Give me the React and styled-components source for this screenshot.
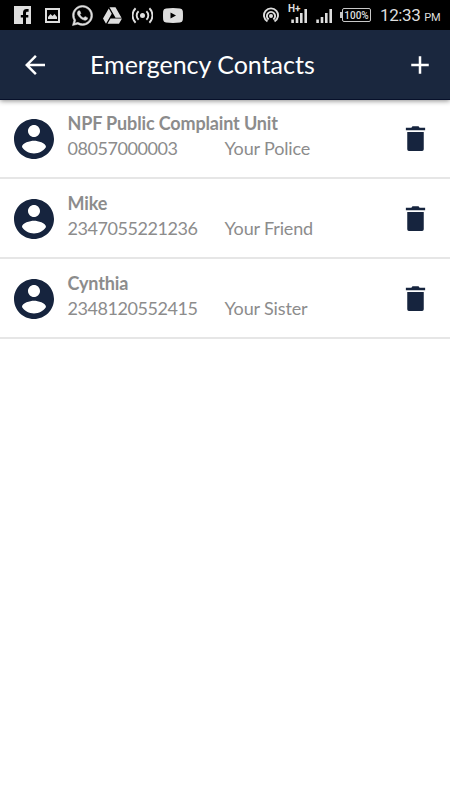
import React from "react";
import styled, { createGlobalStyle } from "styled-components";
import { FaWhatsapp } from "react-icons/fa";
import { MdAdd, MdArrowBack } from "react-icons/md";

const GlobalStyle = createGlobalStyle`
  * {
    box-sizing: border-box;
  }

  body {
    margin: 0;
    background: #fff;
    font-family: Lato, sans-serif;
  }

  svg {
    display: block;
    flex-shrink: 0;
  }
`;

const Screen = styled.div`
  width: 450px;
  height: 800px;
  overflow: hidden;
  background: #fff;
`;

const StatusBar = styled.div`
  display: flex;
  justify-content: space-between;
  height: 30px;
  padding: 0 10px 0 14px;
  background: #000;
  color: #dedede;
  font-family: Roboto, sans-serif;
`;

const StatusGroup = styled.div`
  display: flex;
  align-items: center;
`;

const StatusIcon = styled.svg`
  margin-left: ${props => props.$gap || 0}px;
  fill: currentColor;
`;

const ChatIcon = styled(FaWhatsapp)`
  margin: 0 9px 0 11px;
  stroke: currentColor;
  stroke-width: 12px;
`;

const Signal = styled.div`
  position: relative;
  margin: 2px 0 0 ${props => props.$gap}px;
`;

const NetworkType = styled.span`
  position: absolute;
  top: -5px;
  left: -3px;
  font-size: 10px;
  font-weight: 700;
  line-height: 10px;
`;

const Battery = styled.div`
  display: flex;
  align-items: center;
  margin-left: 8px;

  &::before {
    content: "";
    width: 2px;
    height: 6px;
    background: #c8c8c8;
  }
`;

const BatteryLevel = styled.span`
  width: 29px;
  height: 14px;
  border: 1px solid #c8c8c8;
  border-radius: 2px;
  font-size: 10px;
  font-weight: 500;
  line-height: 13px;
  text-align: center;
`;

const Clock = styled.span`
  width: 60px;
  margin-left: 9px;
  font-size: 17px;
  line-height: 30px;
  letter-spacing: -0.4px;
  white-space: nowrap;
  padding-top: 2px;
`;

const Meridiem = styled.small`
  margin-left: 4px;
  font-size: 11px;
`;

const Header = styled.header`
  position: relative;
  display: flex;
  align-items: center;
  height: 70px;
  padding: 0 15px 0 20px;
  background: #1a273e;
  border-bottom: 1px solid #07102a;
  box-shadow: 0 1px 5px rgba(0, 0, 0, 0.45);
  color: #fff;
`;

const Title = styled.h1`
  flex: 1;
  margin: -2px 0 0 40px;
  font-size: 25px;
  font-weight: 400;
  line-height: 30px;
`;

const ContactList = styled.ul`
  margin: -1px 0 0;
  padding: 0;
  list-style: none;
`;

const ContactRow = styled.li`
  display: flex;
  align-items: center;
  height: 80px;
  padding: 0 18px 0 10px;
  border-bottom: 2px solid #e6e6e6;
  color: #16243e;
`;

const Avatar = styled.svg`
  width: 48px;
  height: 48px;
  margin-top: 1px;
  fill: currentColor;
`;

const ContactInfo = styled.div`
  flex: 1;
  margin: -6px 0 0 9.5px;
  color: #8c8c8c;
  font-size: 18px;
`;

const ContactName = styled.div`
  font-weight: 700;
  line-height: 26px;
  letter-spacing: -0.14px;
`;

const ContactDetails = styled.div`
  display: grid;
  grid-template-columns: 157px 1fr;
  line-height: 25px;
`;

const Phone = styled.span`
  letter-spacing: -0.44px;
`;

const Relation = styled.span`
  letter-spacing: -0.15px;
`;

const contacts = [
  {
    name: "NPF Public Complaint Unit",
    phone: "08057000003",
    relation: "Your Police"
  },
  { name: "Mike", phone: "2347055221236", relation: "Your Friend" },
  { name: "Cynthia", phone: "2348120552415", relation: "Your Sister" }
];

const FacebookIcon = () => (
  <StatusIcon width="17" height="18" viewBox="0 0 17 18">
    <path d="M0 0h17v18h-5v-6.5h2.3V9H12V7.2c0-.9.4-1.4 1.4-1.4h1.2V3.1h-2c-2.5 0-3.6 1.4-3.6 3.7V9H6.8v2.5H9V18H0z" />
  </StatusIcon>
);

const GalleryIcon = () => (
  <StatusIcon $gap={14} width="15" height="15" viewBox="0 0 15 15">
    <path fillRule="evenodd" d="M0 0h15v15H0zM2 2v11h11V2z" />
    <path d="M3 11V9l2.5-3 2 2L9.5 6 12 9v2z" />
  </StatusIcon>
);

const DriveIcon = () => (
  <StatusIcon width="19" height="17" viewBox="1.15 2 21.7 19">
    <path d="M7.71 3.5L1.15 15l3.43 6 6.55-11.5zM9.73 15L6.3 21h13.12l3.43-6zM22.28 14L15.42 2H8.58l6.86 12z" />
  </StatusIcon>
);

const BroadcastIcon = () => (
  <StatusIcon $gap={10} width="21" height="17" viewBox="0 0 21 17">
    <circle cx="10.5" cy="8.5" r="2.5" />
    <path
      d="M6.6 4.2a5.8 5.8 0 0 0 0 8.6M14.4 4.2a5.8 5.8 0 0 1 0 8.6M3.6 1.3a10 10 0 0 0 0 14.4M17.4 1.3a10 10 0 0 1 0 14.4"
      fill="none"
      stroke="currentColor"
      strokeWidth="1.9"
    />
  </StatusIcon>
);

const VideoIcon = () => (
  <StatusIcon $gap={10} width="20" height="15" viewBox="0 0 20 15">
    <path
      fillRule="evenodd"
      d="M3 .5Q10-.3 17 .5q2.5.2 2.8 2.6.4 4.4 0 8.8-.3 2.4-2.8 2.6-7 .8-14 0Q.5 14.3.2 11.9q-.4-4.4 0-8.8Q.5.7 3 .5zM7.5 4.5v6l5.5-3z"
    />
  </StatusIcon>
);

const HotspotIcon = () => (
  <StatusIcon width="16" height="16" viewBox="0 0 16 16">
    <circle cx="8" cy="9" r="2" />
    <path
      d="M5.7 12.4a4.1 4.1 0 1 1 4.6 0M4.5 14.4a7 7 0 1 1 7 0"
      fill="none"
      stroke="currentColor"
      strokeWidth="1.9"
    />
  </StatusIcon>
);

const SignalBars = () => (
  <StatusIcon width="16" height="14" viewBox="0 0 16 14">
    <path d="M.3 10.5h2.6V14H.3zM4.7 8h2.6v6H4.7zM9 4h2.6v10H9zM13.4 0H16v14h-2.6z" />
  </StatusIcon>
);

const AvatarIcon = () => (
  <Avatar viewBox="0 0 24 24">
    <path d="M12 2C6.48 2 2 6.48 2 12s4.48 10 10 10 10-4.48 10-10S17.52 2 12 2zm0 3c1.66 0 3 1.34 3 3s-1.34 3-3 3-3-1.34-3-3 1.34-3 3-3zm0 14.2c-2.5 0-4.71-1.28-6-3.22.03-1.99 4-3.08 6-3.08 1.99 0 5.97 1.09 6 3.08-1.29 1.94-3.5 3.22-6 3.22z" />
  </Avatar>
);

const TrashIcon = () => (
  <svg width="33" height="33" viewBox="0 0 24 24" fill="currentColor">
    <path d="M6 7.3h12v12.5q0 1.2-1.2 1.2H7.2Q6 21 6 19.8zM5 4.2h4l.8-1.2h4.4l.8 1.2h4V6H5z" />
  </svg>
);

const Contact = ({ name, phone, relation }) => (
  <ContactRow>
    <AvatarIcon />
    <ContactInfo>
      <ContactName>{name}</ContactName>
      <ContactDetails>
        <Phone>{phone}</Phone>
        <Relation>{relation}</Relation>
      </ContactDetails>
    </ContactInfo>
    <TrashIcon />
  </ContactRow>
);

const App = () => (
  <Screen>
    <GlobalStyle />
    <StatusBar>
      <StatusGroup>
        <FacebookIcon />
        <GalleryIcon />
        <ChatIcon size={23} />
        <DriveIcon />
        <BroadcastIcon />
        <VideoIcon />
      </StatusGroup>
      <StatusGroup>
        <HotspotIcon />
        <Signal $gap={12}>
          <NetworkType>H+</NetworkType>
          <SignalBars />
        </Signal>
        <Signal $gap={9}>
          <SignalBars />
        </Signal>
        <Battery>
          <BatteryLevel>100%</BatteryLevel>
        </Battery>
        <Clock>
          12:33<Meridiem>PM</Meridiem>
        </Clock>
      </StatusGroup>
    </StatusBar>
    <Header>
      <MdArrowBack size={30} />
      <Title>Emergency Contacts</Title>
      <MdAdd size={30} />
    </Header>
    <ContactList>
      {contacts.map(contact => (
        <Contact key={contact.phone} {...contact} />
      ))}
    </ContactList>
  </Screen>
);

export default App;
